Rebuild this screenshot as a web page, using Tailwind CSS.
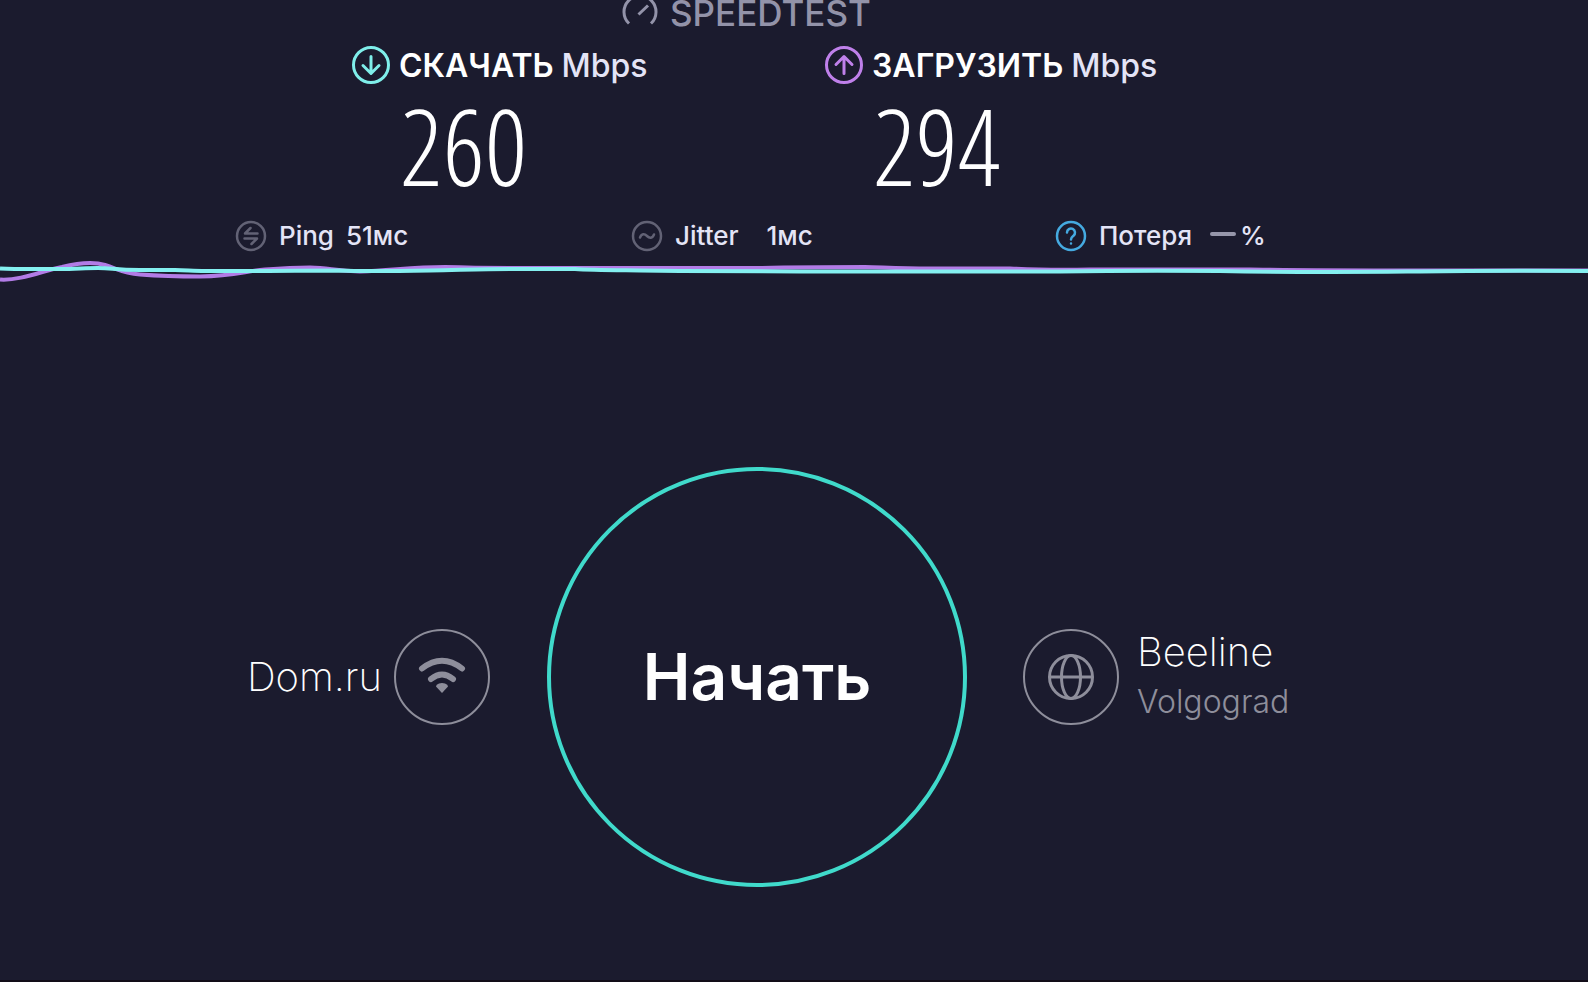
<!DOCTYPE html>
<html lang="ru">
<head>
<meta charset="utf-8">
<meta name="viewport" content="width=device-width, initial-scale=1">
<title>Speedtest</title>
<script src="https://cdn.jsdelivr.net/npm/@tailwindcss/browser@4"></script>
</head>
<body class="flex min-h-screen flex-col overflow-x-hidden border-b-2 border-[#120d18] bg-[#1b1b2e] font-['Inter','Noto_Sans',sans-serif] text-white">
  <header class="grid h-[38px] shrink-0 grid-cols-[622fr_966fr] text-[#9393a9]">
    <div class="col-start-2 flex h-[26px] items-center gap-3">
      <svg class="h-[36px] w-[36px] shrink-0" viewBox="0 0 36 36" fill="none" stroke="currentColor" stroke-width="3" aria-hidden="true">
        <path d="M7 28.500A16 16 0 1 1 29 28.500M16.500 19.500L26 10.500"/>
      </svg>
      <span class="text-[35px] leading-none font-medium">SPEEDTEST</span>
    </div>
  </header>

  <section class="grid shrink-0 grid-cols-[351fr_473fr_764fr]">
    <div class="col-start-2">
      <h2 class="flex h-[54px] items-center gap-2 text-[32px] leading-9 font-semibold whitespace-nowrap">
        <svg class="h-10 w-10 shrink-0" viewBox="0 0 40 40" fill="none" stroke="#7feeea" stroke-width="3" stroke-linecap="round" stroke-linejoin="round" aria-hidden="true">
          <circle cx="20" cy="20" r="17.500"/><path d="M20 11.500V28M12 20.500l8 8 8-8"/>
        </svg>
        <span class="pt-0.5">СКАЧАТЬ</span><span class="pt-0.5 font-medium text-[#e4e4f6]">Mbps</span>
      </h2>
      <p class="pl-[49px] font-['Open_Sans_Condensed_Light','Open_Sans',sans-serif] text-[106px] leading-[106px] font-light">260</p>
    </div>
    <div>
      <h2 class="flex h-[54px] items-center gap-2 text-[32px] leading-9 font-semibold whitespace-nowrap">
        <svg class="h-10 w-10 shrink-0" viewBox="0 0 40 40" fill="none" stroke="#bf80ea" stroke-width="3" stroke-linecap="round" stroke-linejoin="round" aria-hidden="true">
          <circle cx="20" cy="20" r="17.500"/><path d="M20 28.500V12M12 19.500l8-8 8 8"/>
        </svg>
        <span class="pt-0.5">ЗАГРУЗИТЬ</span><span class="pt-0.5 font-medium text-[#e4e4f6]">Mbps</span>
      </h2>
      <p class="pl-[49px] font-['Open_Sans_Condensed_Light','Open_Sans',sans-serif] text-[106px] leading-[106px] font-light">294</p>
    </div>
  </section>

  <section class="mt-[22px] mb-0.5 grid h-7 shrink-0 grid-cols-[235fr_396fr_424fr_533fr] text-[26px] leading-none font-medium whitespace-nowrap text-[#e4e4f6]">
    <div class="col-start-2 flex items-center gap-3">
      <svg class="h-8 w-8 shrink-0" viewBox="0 0 32 32" fill="none" stroke="#626275" stroke-width="2.500" stroke-linecap="round" stroke-linejoin="round" aria-hidden="true">
        <circle cx="16" cy="16" r="14"/><path d="M22.500 13.500H10L15.500 8M9.500 18.500H22L16.500 24"/>
      </svg>
      <span>Ping</span><span>51мс</span>
    </div>
    <div class="flex items-center gap-3">
      <svg class="h-8 w-8 shrink-0" viewBox="0 0 32 32" fill="none" stroke="#626275" stroke-width="2.500" stroke-linecap="round" aria-hidden="true">
        <circle cx="16" cy="16" r="14"/><path d="M9 17.500c1.500-4 4.500-4 7-1.500s5.500 2.500 7-1.500"/>
      </svg>
      <span>Jitter</span><span class="pl-4">1мс</span>
    </div>
    <div class="flex items-center gap-3">
      <svg class="h-8 w-8 shrink-0" viewBox="0 0 32 32" fill="none" stroke="#45aae0" stroke-width="2.500" stroke-linecap="round" stroke-linejoin="round" aria-hidden="true">
        <circle cx="16" cy="16" r="14"/><path d="M12 12.500a4 4 0 1 1 6.500 3.200c-1.500 1.200-2.500 1.800-2.500 3.800M16 23.500v.1"/>
      </svg>
      <span>Потеря</span>
      <span class="flex items-center gap-1 pl-1.5"><span class="mb-1 h-1 w-[26px] rounded-full bg-[#9696aa]"></span>%</span>
    </div>
  </section>

  <svg class="h-10 w-full shrink-0" viewBox="0 0 1588 40" preserveAspectRatio="none" fill="none" stroke-width="4" aria-hidden="true">
    <path stroke="#b27ce6" d="M0 29.500C20 31 45 20 62 17C78 13 92 11 105 15C118 19 122 23 140 24.500C160 26 180 26.500 200 26.500C235 26 245 21 265 19.500C285 18 298 17.500 310 17.500C330 18 335 21 360 21.500C390 21 410 17 445 17C480 18 500 18 530 18H760C800 17 840 17 865 17C885 17.500 900 18.500 930 18.500H1010C1040 20 1060 20 1090 19.500H1250C1290 20 1300 20.500 1420 20.500H1588"/>
    <path stroke="#84f0f0" d="M0 18.500C20 19.500 40 19 60 19C75 19 85 18 98 18C112 18 115 20 140 20H175C190 20.500 195 21 205 21H260C290 20.500 310 20.500 340 20.500C360 21.500 400 21 430 20.500C460 20 480 19 510 19H575C590 20 600 20 640 20.500C690 21 720 21.500 800 21.500H1060C1120 20.500 1160 20.500 1220 21C1300 22.500 1350 22 1420 21.500C1480 20.500 1520 20.500 1588 21"/>
  </svg>

  <main class="grid grid-cols-[547fr_420fr_621fr] items-center pt-[177px]">
    <div class="flex items-center justify-end gap-3 pr-[57px]">
      <span class="text-[40px] leading-none font-extralight">Dom.ru</span>
      <svg class="h-24 w-24 shrink-0" viewBox="0 0 96 96" fill="none" stroke="#8e8e9b" stroke-linecap="round" aria-hidden="true">
        <circle cx="48" cy="48" r="47" stroke-width="2"/>
        <path stroke-width="6" d="M28 39.500Q48 24 68 39.500M37 50Q48 41 59 50"/>
        <path fill="#8e8e9b" stroke="none" d="M42 57.500Q42 55.500 45 54.500Q48 53.500 51 54.500Q54 55.500 54 57.500L48 64Z"/>
      </svg>
    </div>
    <button type="button" class="aspect-square w-full rounded-full border-4 border-[#40dacb] text-[64px] leading-none font-semibold">Начать</button>
    <div class="flex items-center gap-[18px] pl-14">
      <svg class="h-24 w-24 shrink-0" viewBox="0 0 96 96" fill="none" stroke="#8e8e9b" aria-hidden="true">
        <circle cx="48" cy="48" r="47" stroke-width="2"/>
        <g stroke-width="3"><circle cx="48" cy="48" r="21.500"/><ellipse cx="48" cy="48" rx="9.500" ry="21.500"/><path d="M27 48H69"/></g>
      </svg>
      <div class="flex flex-col gap-[14px] pb-1">
        <span class="text-[40px] leading-none font-extralight">Beeline</span>
        <span class="text-[32px] leading-none font-light text-[#8e8e9b]">Volgograd</span>
      </div>
    </div>
  </main>
</body>
</html>
